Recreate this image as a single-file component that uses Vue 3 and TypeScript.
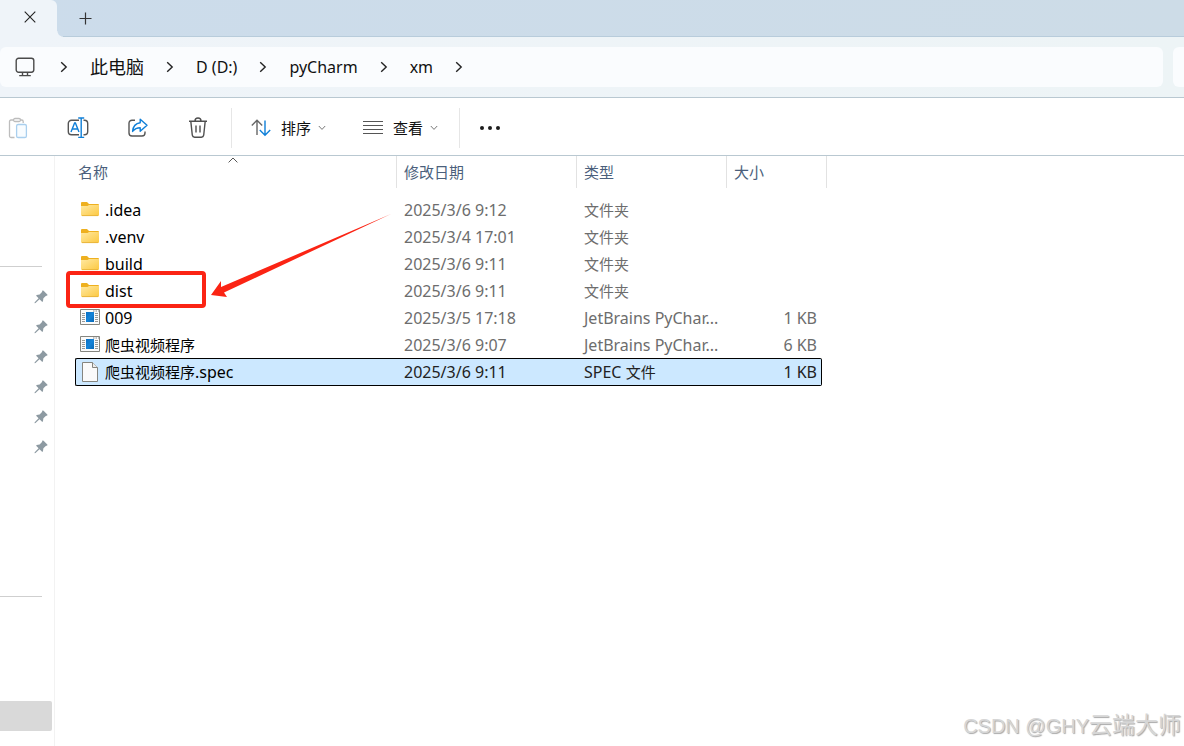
<script setup lang="ts">
interface Run {
  text: string
  cjk?: boolean
}
interface Entry {
  icon: 'folder' | 'app' | 'file'
  name: Run[]
  date: string
  type: Run[]
  size: string
  selected?: boolean
}

const crumbs: Run[] = [
  { text: '此电脑', cjk: true },
  { text: 'D (D:)' },
  { text: 'pyCharm' },
  { text: 'xm' },
]

const folderType: Run[] = [{ text: '文件夹', cjk: true }]
const appType: Run[] = [{ text: 'JetBrains PyChar...' }]

const entries: Entry[] = [
  { icon: 'folder', name: [{ text: '.idea' }], date: '2025/3/6 9:12', type: folderType, size: '' },
  { icon: 'folder', name: [{ text: '.venv' }], date: '2025/3/4 17:01', type: folderType, size: '' },
  { icon: 'folder', name: [{ text: 'build' }], date: '2025/3/6 9:11', type: folderType, size: '' },
  { icon: 'folder', name: [{ text: 'dist' }], date: '2025/3/6 9:11', type: folderType, size: '' },
  { icon: 'app', name: [{ text: '009' }], date: '2025/3/5 17:18', type: appType, size: '1 KB' },
  { icon: 'app', name: [{ text: '爬虫视频程序', cjk: true }], date: '2025/3/6 9:07', type: appType, size: '6 KB' },
  {
    icon: 'file',
    name: [{ text: '爬虫视频程序', cjk: true }, { text: '.spec' }],
    date: '2025/3/6 9:11',
    type: [{ text: 'SPEC ' }, { text: '文件', cjk: true }],
    size: '1 KB',
    selected: true,
  },
]
</script>

<template>
  <div class="window">
    <header class="tabs">
      <div class="tab">
        <button class="plain" aria-label="关闭标签页">
          <svg width="12" height="12" viewBox="0 0 12 12"><path d="M.7.7 11.3 11.3M11.3.7.7 11.3" fill="none" stroke="#222" stroke-width="1.1" /></svg>
        </button>
      </div>
      <button class="plain new-tab" aria-label="新建标签页">
        <svg width="13" height="13" viewBox="0 0 13 13"><path d="M6.5 .5v12M.5 6.5h12" fill="none" stroke="#333" stroke-width="1.2" /></svg>
      </button>
    </header>

    <div class="address">
      <nav class="path" aria-label="路径">
        <svg class="pc" width="20" height="20" viewBox="0 0 20 20" fill="none" stroke="#4a4a4a" stroke-width="1.4">
          <rect x="1.2" y="1.2" width="17.6" height="14" rx="2.4" />
          <path d="M7.5 15.2v3M12.5 15.2v3M4.2 18.6h11.6" />
        </svg>
        <template v-for="crumb in crumbs" :key="crumb.text">
          <svg class="chev" width="8" height="12" viewBox="0 0 8 12"><path d="M1.2 1.2 6.2 6 1.2 10.8" fill="none" stroke="#222" stroke-width="1.4" /></svg>
          <button class="plain crumb" :class="{ cjk: crumb.cjk }">{{ crumb.text }}</button>
        </template>
        <svg class="chev" width="8" height="12" viewBox="0 0 8 12"><path d="M1.2 1.2 6.2 6 1.2 10.8" fill="none" stroke="#222" stroke-width="1.4" /></svg>
      </nav>
      <div class="search"></div>
    </div>

    <div class="toolbar" role="toolbar">
      <button class="plain tool" aria-label="粘贴" disabled>
        <svg width="20" height="22" viewBox="0 0 20 22" fill="none" stroke-width="1.3">
          <path d="M5.5 3H3A1.5 1.5 0 0 0 1.5 4.500V19A1.500 1.500 0 0 0 3 20.500H6.500M12 3h1.700a1.500 1.500 0 0 1 1.500 1.500V6" stroke="#bdbdbd" />
          <rect x="5.500" y="1.500" width="7" height="3" rx="1.500" stroke="#bdbdbd" />
          <rect x="8.600" y="7.500" width="9.800" height="13" rx="1.600" stroke="#a9cfee" fill="#f8fcff" />
        </svg>
      </button>
      <button class="plain tool" aria-label="重命名">
        <svg width="22" height="22" viewBox="0 0 22 22" fill="none" stroke-width="1.4">
          <path d="M12 3.200H4.500A3.200 3.200 0 0 0 1.300 6.400v8.200a3.200 3.200 0 0 0 3.200 3.200H12M16.500 3.200h1a3.200 3.200 0 0 1 3.200 3.200v8.200a3.200 3.200 0 0 1-3.200 3.200h-1" stroke="#555" />
          <path d="M4 15 7.600 6h.8L12 15M5.200 12h5.600M11.200 1h6M14.200 1v19.500M11.200 20.400h6" stroke="#0f7fd8" />
        </svg>
      </button>
      <button class="plain tool" aria-label="共享">
        <svg width="22" height="22" viewBox="0 0 22 22" fill="none" stroke-width="1.4" stroke-linejoin="round">
          <path d="M8 3.200H5A3 3 0 0 0 2 6.200V16a3 3 0 0 0 3 3h10a3 3 0 0 0 3-3v-1.500" stroke="#555" />
          <path d="M13.200 2.200 20 8.200l-6.800 6v-3.400c-3.600 0-5.500 1-7.600 3.600.4-4.600 3-8 7.600-8.600z" stroke="#0f7fd8" />
        </svg>
      </button>
      <button class="plain tool" aria-label="删除">
        <svg width="22" height="22" viewBox="0 0 22 22" fill="none" stroke="#4f4f4f" stroke-width="1.4">
          <path d="M2 4.200h18M8 4a3 3 0 0 1 6 0M3.800 4.200l1.500 14a2.400 2.400 0 0 0 2.400 2h6.600a2.400 2.400 0 0 0 2.400-2l1.500-14M9 8.500v7M13 8.500v7" />
        </svg>
      </button>
      <span class="sep"></span>
      <button class="plain menu">
        <svg width="20" height="18" viewBox="0 0 20 18" fill="none" stroke-width="1.4">
          <path d="M.8 6.500 6 1.300l5.200 5.200M6 1.300V16" stroke="#666" />
          <path d="M8.800 11 14 16.200l5.200-5.200M14 16.200V1.500" stroke="#0f7fd8" />
        </svg>
        <span>排序</span>
        <svg class="drop" width="8" height="6" viewBox="0 0 8 6"><path d="M.8 1 4 4.400 7.200 1" fill="none" stroke="#777" /></svg>
      </button>
      <button class="plain menu view">
        <svg width="20" height="14" viewBox="0 0 20 14"><path d="M0 .5h20M0 4.500h20M0 8.500h20M0 12.500h20" stroke="#555" /></svg>
        <span>查看</span>
        <svg class="drop" width="8" height="6" viewBox="0 0 8 6"><path d="M.8 1 4 4.400 7.200 1" fill="none" stroke="#777" /></svg>
      </button>
      <span class="sep"></span>
      <button class="plain more" aria-label="更多">
        <svg width="22" height="6" viewBox="0 0 22 6" fill="#1c1c1c"><circle cx="3" cy="3" r="2" /><circle cx="11" cy="3" r="2" /><circle cx="19" cy="3" r="2" /></svg>
      </button>
    </div>

    <main class="body">
      <aside class="side">
        <hr />
        <ul>
          <li v-for="n in 6" :key="n">
            <svg width="14" height="14" viewBox="0 0 14 14" fill="#8d9aa2">
              <path d="M8.400 .6Q9 .2 9.600 .7L13.300 4.400Q13.800 5 13.200 5.500L11.800 5.900 9.400 8.300 8.900 11.400Q8.400 12 7.800 11.500L5.500 9.200 1.500 13.100.5 13.300.7 12.300 4.600 8.300 2.400 6.100Q1.900 5.500 2.600 5L5.600 4.500 8 2.100z" />
            </svg>
          </li>
        </ul>
        <hr class="second" />
        <div class="current"></div>
      </aside>

      <section class="list">
        <table>
          <colgroup><col class="c-name" /><col class="c-date" /><col class="c-type" /><col class="c-size" /><col class="c-end" /></colgroup>
          <thead>
            <tr>
              <th class="sorted">
                名称
                <svg class="caret" width="10" height="6" viewBox="0 0 10 6"><path d="M.6 5.400 5 1l4.400 4.400" fill="none" stroke="#555" /></svg>
              </th>
              <th>修改日期</th>
              <th>类型</th>
              <th class="last">大小</th>
              <th class="end"></th>
            </tr>
          </thead>
          <tbody>
            <tr v-for="(entry, i) in entries" :key="i" :class="{ selected: entry.selected }">
              <td class="name">
                <div>
                  <svg v-if="entry.icon === 'folder'" width="20" height="20" viewBox="0 0 20 20">
                    <defs><linearGradient id="folder-fill" x1="0" y1="0" x2="1" y2="1"><stop offset="0" stop-color="#ffe9a2" /><stop offset="1" stop-color="#fcc840" /></linearGradient></defs>
                    <path d="M1 3Q1 2 2 2H7L9 4H18Q19 4 19 5V8H1z" fill="#eeb01f" />
                    <path d="M1 6H7.500L9 5H19V15Q19 16 18 16H2Q1 16 1 15z" fill="url(#folder-fill)" />
                    <path d="M2 15.600H18" stroke="#e9b53c" />
                  </svg>
                  <svg v-else-if="entry.icon === 'app'" width="20" height="20" viewBox="0 0 20 20">
                    <defs><linearGradient id="app-fill" x1="0" y1="0" x2="1" y2="1"><stop offset="0" stop-color="#0a6fc2" /><stop offset=".5" stop-color="#1583d8" /><stop offset="1" stop-color="#0767b5" /></linearGradient></defs>
                    <path d="M.5 1.500h19v15H.5z" fill="#fafafa" stroke="#85857f" />
                    <path d="M13 3h1.500M15.500 3H17M18 3h1" stroke="#888" />
                    <path d="M2 5.500h3M2 7.500h3M2 9.500h3M2 11.500h3M2 13.500h3M15 5.500h3M15 7.500h3M15 9.500h3M15 11.500h3M15 13.500h3" stroke="#999" />
                    <path d="M6 4h8v10H6z" fill="url(#app-fill)" />
                  </svg>
                  <svg v-else width="20" height="20" viewBox="0 0 20 20">
                    <path d="M2.500 .5h10l5 5v14h-15z" fill="#fafafa" stroke="#85857f" />
                    <path d="M12.500 .5v5h5" fill="#eee" stroke="#85857f" />
                  </svg>
                  <span><span v-for="run in entry.name" :key="run.text" :class="{ cjk: run.cjk }">{{ run.text }}</span></span>
                </div>
              </td>
              <td>{{ entry.date }}</td>
              <td><span v-for="run in entry.type" :key="run.text" :class="{ cjk: run.cjk }">{{ run.text }}</span></td>
              <td class="size">{{ entry.size }}</td>
              <td class="end"></td>
            </tr>
          </tbody>
        </table>
      </section>

      <div class="frame"></div>
      <svg class="arrow" width="184" height="88" viewBox="0 0 184 88"><path d="M1 85 11 71 11 77 181 4 14 82.500 17 87z" fill="#fb2414" /></svg>
    </main>
    <div class="watermark">CSDN @GHY<span>云端大师</span></div>
  </div>
</template>

<style>
body {
  margin: 0;
}
</style>

<style scoped>
* {
  box-sizing: border-box;
}
.window {
  min-height: 100vh;
  display: flex;
  flex-direction: column;
  position: relative;
  overflow: hidden;
  background: #fff;
  color: #111;
  font: 16px/20px "Noto Sans", "Noto Sans CJK SC", sans-serif;
}
.plain {
  border: 0;
  padding: 0;
  background: none;
  color: inherit;
  font: inherit;
  display: flex;
  align-items: center;
}
svg {
  display: block;
  flex: none;
}
.tabs {
  display: flex;
  height: 37px;
  background: linear-gradient(90deg, #ccdceb, #cddce7);
  border-bottom: 1px solid #b8ccdb;
}
.tab {
  position: relative;
  width: 57px;
  height: 37px;
  padding: 11px 0 0 24px;
  background: #eff4f9;
  border-top-right-radius: 6px;
}
.tab::after {
  content: "";
  position: absolute;
  left: 100%;
  bottom: 0;
  width: 6px;
  height: 6px;
  background: radial-gradient(circle at 100% 0, transparent 5px, #eff4f9 6px);
}
.new-tab {
  margin-left: 22px;
}
.address {
  display: flex;
  gap: 10px;
  height: 61px;
  padding: 10px 0;
  background: linear-gradient(90deg, #eff4f9, #edf4f6);
  border-bottom: 1px solid #b9c8d1;
}
.path {
  flex: 1;
  display: flex;
  align-items: center;
  gap: 22px;
  padding-left: 15px;
  background: #fafcfe;
  border-radius: 6px;
}
.pc {
  margin-right: 3px;
}
.search {
  width: 11px;
  background: #fafcfe;
  border-radius: 6px 0 0 6px;
}
.crumb {
  line-height: 24px;
}
.crumb.cjk {
  font-size: 18px;
}
.toolbar {
  display: flex;
  align-items: center;
  height: 58px;
  padding: 2px 0 0 7px;
  border-bottom: 1px solid #b9c8d1;
}
.tool {
  width: 22px;
  height: 22px;
  margin-right: 38px;
  justify-content: center;
}
.tool + .sep {
  margin-left: -16px;
}
.sep {
  width: 1px;
  height: 40px;
  background: #e6e6e6;
}
.menu {
  gap: 10px;
  margin-left: 19px;
  font-size: 15px;
}
.menu .drop {
  margin-left: -3px;
}
.view {
  margin: 0 21px 0 37px;
}
.more {
  margin-left: 19px;
}
.body {
  flex: 1;
  display: flex;
  position: relative;
}
.side {
  width: 55px;
  border-right: 1px solid #f2f2f2;
}
.side hr {
  width: 42px;
  margin: 110px 0 0;
  border: 0;
  border-top: 1px solid #cfcfcf;
}
.side hr.second {
  margin-top: 134px;
}
.side ul {
  list-style: none;
  margin: 15px 0 0;
  padding: 0;
}
.side li {
  display: flex;
  align-items: center;
  height: 30px;
  padding-left: 34px;
}
.current {
  width: 52px;
  height: 30px;
  margin-top: 104px;
  background: #d9d9d9;
  border-radius: 0 2px 2px 0;
}
.list {
  flex: 1;
  padding-left: 20px;
}
table {
  width: 752px;
  table-layout: fixed;
  border-collapse: separate;
  border-spacing: 0;
}
.c-name { width: 322px; }
.c-date { width: 180px; }
.c-type { width: 150px; }
.c-size { width: 95px; }
.c-end { width: 5px; }
th {
  height: 32px;
  padding: 0 0 0 7px;
  border-right: 1px solid #e2e2e2;
  color: #4b5f7c;
  font-size: 15px;
  font-weight: 400;
  line-height: 20px;
  text-align: left;
}
th.last {
  border-right: 0;
}
th.end {
  padding: 0;
}
th.sorted {
  position: relative;
  padding-left: 3px;
}
.caret {
  position: absolute;
  left: 153px;
  top: 1px;
}
tbody::before {
  content: "";
  display: table-row;
  height: 8px;
}
td {
  height: 27px;
  padding: 0 0 0 7px;
  color: #6d6d6d;
  white-space: nowrap;
}
td.name {
  padding-left: 5px;
  color: #000;
}
td.name div {
  display: flex;
  align-items: center;
  gap: 5px;
  height: 20px;
}
td.size {
  padding: 0 5px 0 0;
  text-align: right;
}
td.end {
  padding: 0;
}
td .cjk {
  font-size: 15px;
}
.selected td:not(.end) {
  height: 28px;
  background: #cce8ff;
  border: solid #000;
  border-width: 1px 0;
  color: #222;
}
.selected td.name:not(.end) {
  padding-left: 4px;
  border-left-width: 1px;
  border-radius: 2px 0 0 2px;
  color: #000;
}
.selected td.size:not(.end) {
  padding-right: 4px;
  border-right-width: 1px;
  border-radius: 0 2px 2px 0;
}
.frame {
  position: absolute;
  left: 66px;
  top: 115px;
  width: 140px;
  height: 37px;
  border: 4px solid #fb2414;
  border-radius: 4px;
}
.arrow {
  position: absolute;
  left: 210px;
  top: 54px;
}
.watermark {
  position: absolute;
  right: 3px;
  bottom: 4px;
  font: 20px/32px "Liberation Sans", "Noto Sans CJK SC", sans-serif;
  color: #d6d6d6;
  text-shadow: 1px 1px 1px #a8a8a8;
}
.watermark span {
  font-size: 23px;
}
</style>
